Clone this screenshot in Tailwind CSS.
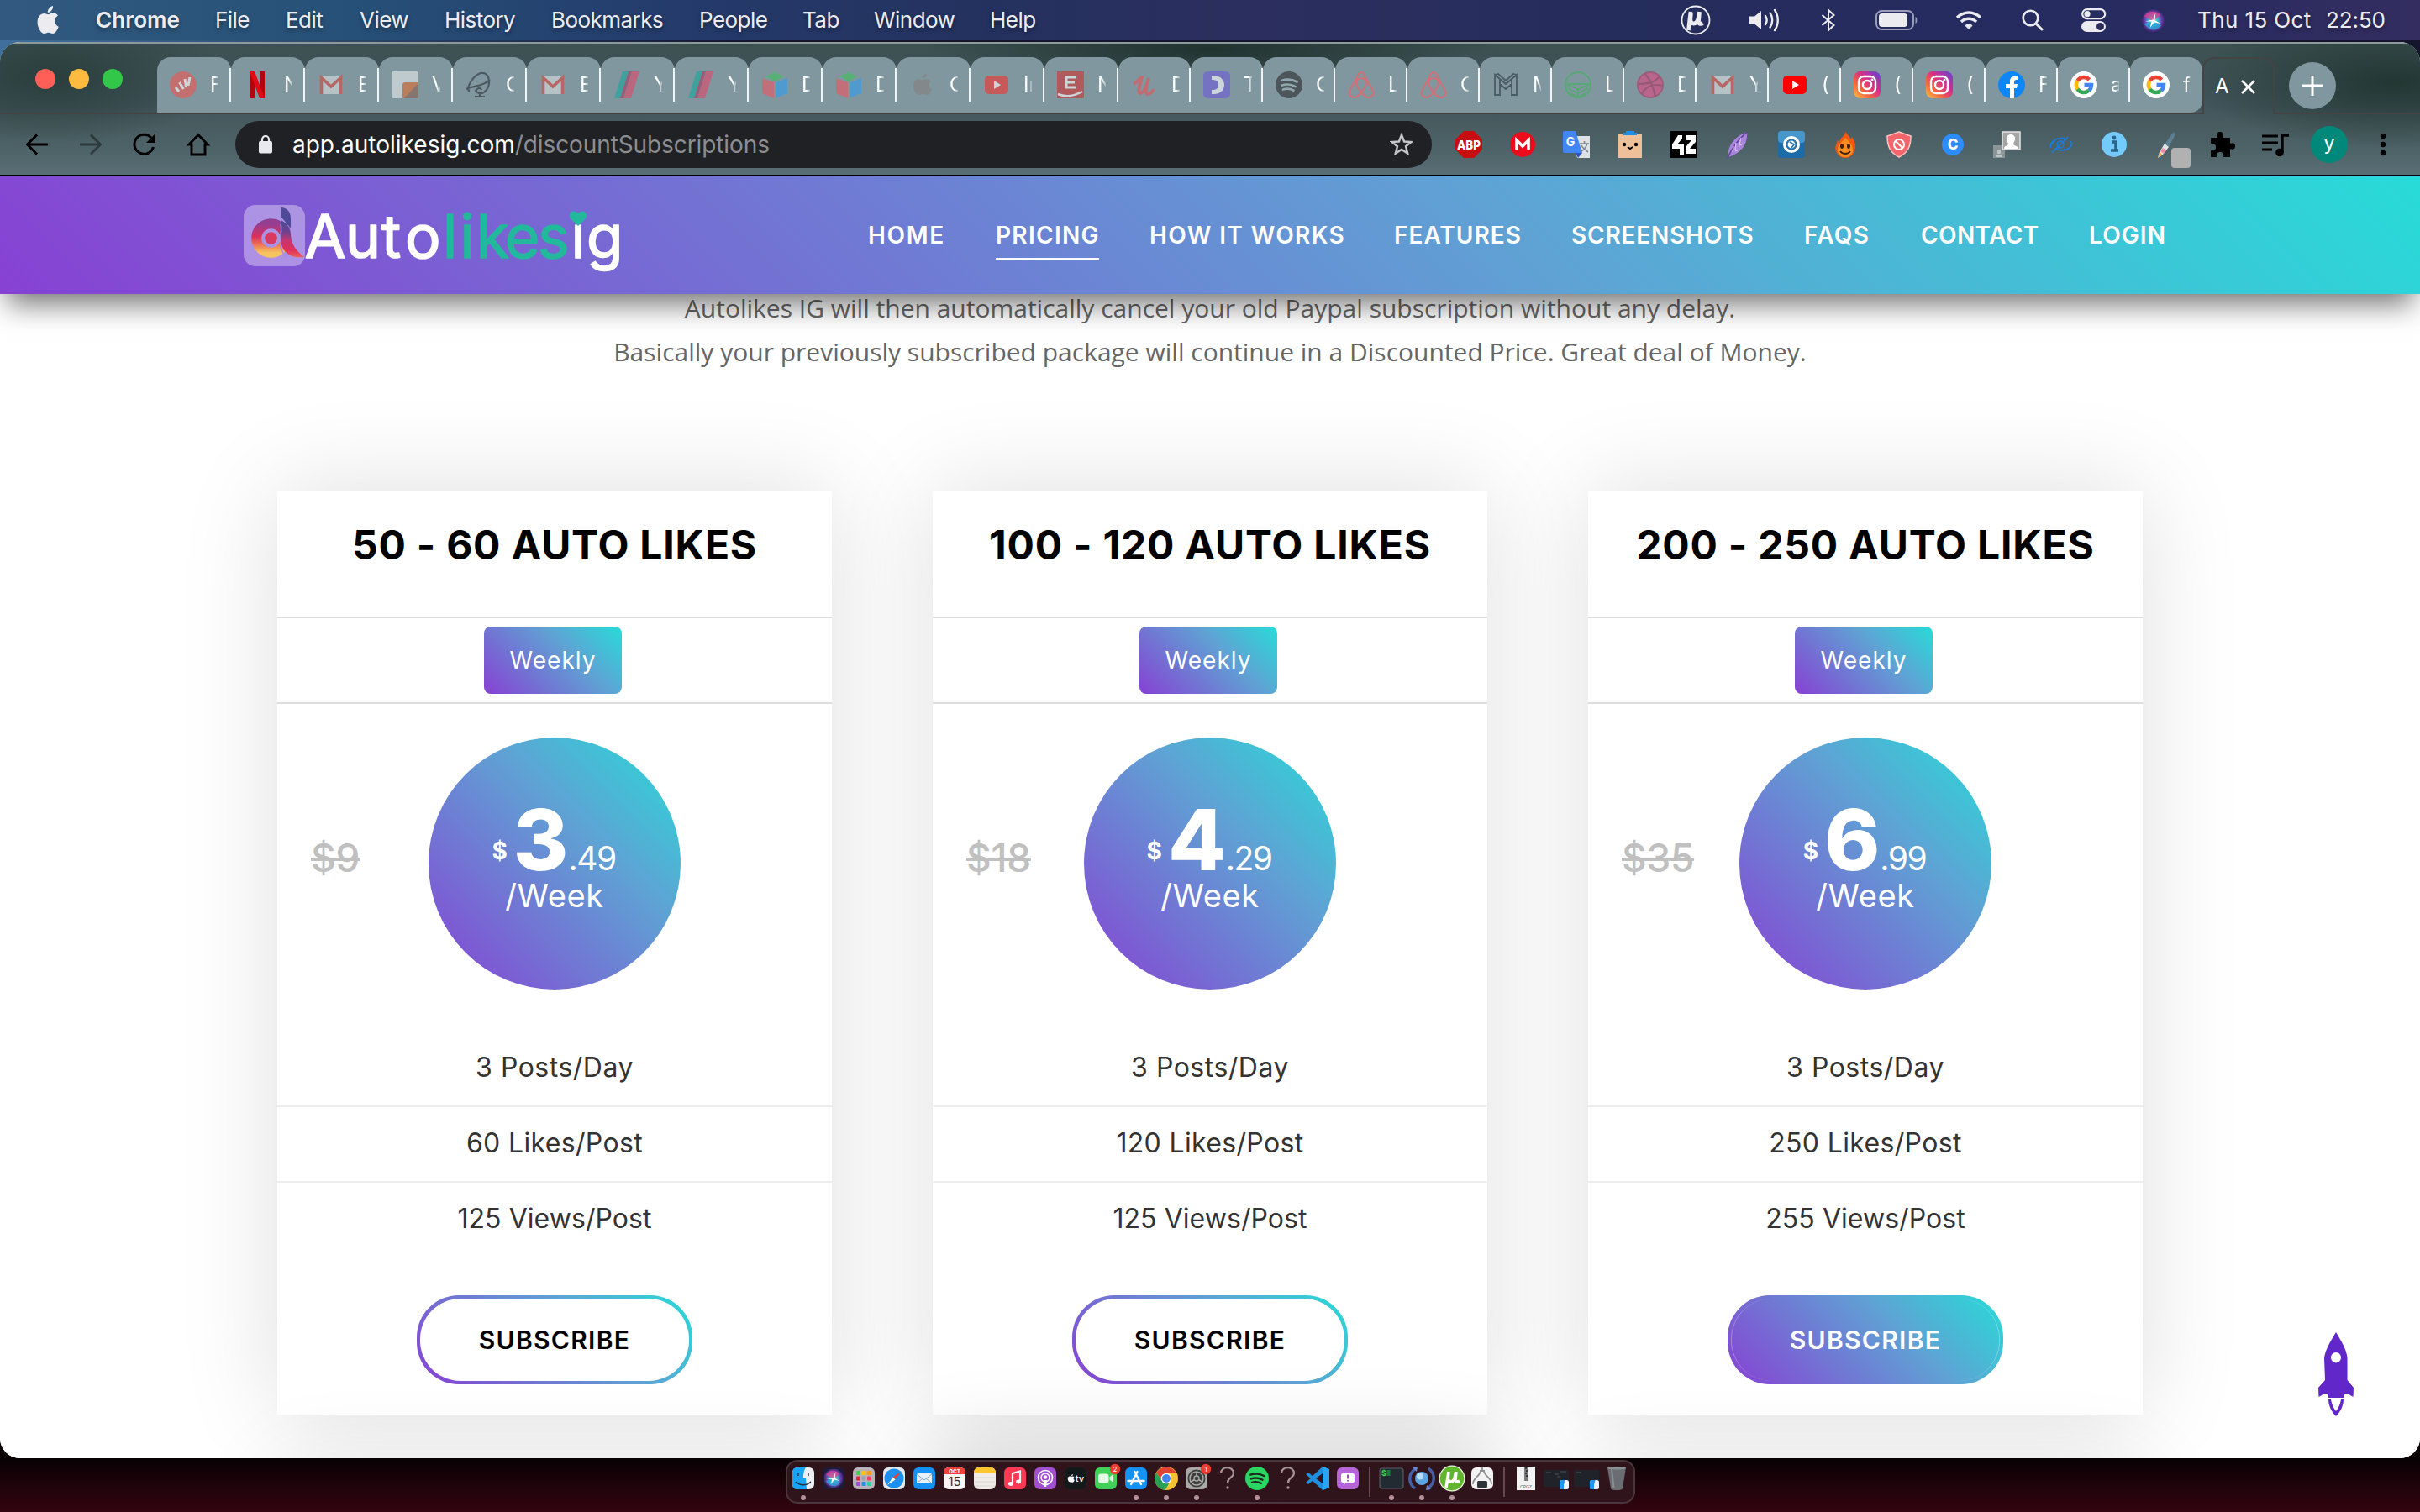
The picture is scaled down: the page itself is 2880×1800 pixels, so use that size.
<!DOCTYPE html>
<html lang="en">
<head>
<meta charset="utf-8">
<title>Autolikesig – Discount Subscriptions</title>
<script src="https://cdn.jsdelivr.net/npm/@tailwindcss/browser@4"></script>
</head>
<body class="w-[2880px] h-[1800px] overflow-hidden flex flex-col font-['Inter',sans-serif] bg-[linear-gradient(180deg,transparent_900px,#0b0204_900px),linear-gradient(90deg,#3f6f9c_0px,#15152e_900px)]">

<!-- menu bar -->
<div class="h-12 shrink-0 flex items-center text-[26px] leading-[48px] tracking-[-0.55px] text-[#ececf0] whitespace-nowrap bg-[linear-gradient(90deg,#325a80_0px,#265077_420px,#243b6b_800px,#24315f_1180px,#2b2e5e_1500px,#252d5c_1920px,#262b60_2500px,#332d60_2880px)] [text-shadow:0_3px_5px_rgba(0,0,0,0.4)]">
  <svg class="ml-[43px] mr-[42px] w-[29px] h-[34px] shrink-0" viewBox="0 0 29 34" fill="#ececf0"><path d="M20 0c.3 2.300-.6 4.300-1.900 5.800-1.200 1.400-2.700 2.200-4.300 2.100-.2-2.200.7-4.100 1.900-5.500C16.900 1 18.700.1 20 0zM14.500 10.300c1.300 0 3-1.700 5.600-1.700 2.600 0 4.700 1.300 5.900 3-3 1.900-3.700 4.200-3.700 6.400 0 3.200 2 5.600 4.400 6.700-1 3.300-3.900 8.300-6.800 8.300-2 0-2.900-1.300-5.200-1.300-2.300 0-3.300 1.300-5.200 1.300C5.800 33 1.600 25.800 1.600 19.500c0-6.600 4-10.500 8-10.500 2.200 0 3.900 1.300 4.900 1.300z"/></svg>
  <span class="w-[142px] font-semibold tracking-[0.1px]">Chrome</span>
  <span class="w-[84px]">File</span>
  <span class="w-[88px]">Edit</span>
  <span class="w-[101px]">View</span>
  <span class="w-[127px]">History</span>
  <span class="w-[176px]">Bookmarks</span>
  <span class="w-[123px]">People</span>
  <span class="w-[85px]">Tab</span>
  <span class="w-[138px]">Window</span>
  <span class="w-[100px]">Help</span>
  <div class="ml-auto flex items-center">
    <div class="w-[82px] flex justify-center"><svg class="w-9 h-9" viewBox="0 0 36 36"><circle cx="18" cy="18" r="16.500" fill="none" stroke="#ececf0" stroke-width="1.800"/><path d="M12 8L9.500 30M12.500 10c-1 7-1.500 12 3 12s6-5 6.500-12M22.500 8l-1 11c-.3 4 2 4 5 2.500" fill="none" stroke="#ececf0" stroke-width="4.800"/></svg></div>
    <div class="w-[82px] flex justify-center"><svg class="w-[38px] h-[28px]" viewBox="0 0 38 28"><path d="M1 9.500h6L15 3v22l-8-6.500H1z" fill="#ececf0"/><path d="M20 9c2 3 2 7 0 10M25.500 5.500c3.600 5 3.600 12 0 17M31 2c5 7 5 17 0 24" fill="none" stroke="#ececf0" stroke-width="2.400" stroke-linecap="round"/></svg></div>
    <div class="w-[70px] flex justify-center"><svg class="w-[20px] h-[28px]" viewBox="0 0 20 28"><path d="M2.500 8l14 12L10 26V2l6.500 6-14 12" fill="none" stroke="#ececf0" stroke-width="2"/></svg></div>
    <div class="w-[94px] flex justify-center"><svg class="w-[52px] h-[24px]" viewBox="0 0 52 24"><rect x="1" y="1" width="44" height="22" rx="6.500" fill="none" stroke="#9a9cb8" stroke-width="2"/><rect x="4" y="4" width="34" height="16" rx="4" fill="#ececf0"/><path d="M47.500 8c2.500 1 2.500 7 0 8z" fill="#9a9cb8"/></svg></div>
    <div class="w-[76px] flex justify-center"><svg class="w-[32px] h-[24px]" viewBox="0 0 32 24" fill="none" stroke="#ececf0" stroke-width="3.400"><path d="M2 9c8-8 20-8 28 0M7 14c5-5 13-5 18 0"/><path d="M12 18.500c2.500-2.200 5.500-2.200 8 0L16 22.500z" fill="#ececf0" stroke-width="1"/></svg></div>
    <div class="w-[76px] flex justify-center"><svg class="w-[26px] h-[26px]" viewBox="0 0 26 26"><circle cx="10.500" cy="10.500" r="8.800" fill="none" stroke="#ececf0" stroke-width="2.600"/><path d="M17 17l7 7" stroke="#ececf0" stroke-width="3" stroke-linecap="round"/></svg></div>
    <div class="w-[70px] flex justify-center"><svg class="w-[30px] h-[28px]" viewBox="0 0 30 28"><rect x="1.200" y="1.200" width="27" height="11" rx="5.500" fill="none" stroke="#ececf0" stroke-width="2.200"/><circle cx="7" cy="6.700" r="3.600" fill="#ececf0"/><rect x="0" y="15" width="29" height="13" rx="6.500" fill="#ececf0"/><circle cx="22.500" cy="21.500" r="4.500" fill="#2b2b5e"/></svg></div>
    <div class="w-[70px] flex justify-center"><svg class="w-[27px] h-[27px]" viewBox="0 0 28 28"><use href="#siri"/></svg></div>
    <span class="ml-[18px] w-[153px] tracking-[0.4px]">Thu 15 Oct</span>
    <span class="w-[112px] tracking-[-0.1px]">22:50</span>
  </div>
</div>

<!-- browser window -->
<div class="relative mt-0.5 h-[1686px] shrink-0 rounded-[24px] overflow-hidden bg-white flex flex-col">
  <div class="h-[160px] shrink-0 border-t-2 border-[#8d9a9b] flex flex-col bg-[radial-gradient(ellipse_200px_80px_at_60px_40px,#2a3e3d_0%,transparent_100%),radial-gradient(ellipse_340px_46px_at_1440px_6px,#20332f_0%,transparent_100%),radial-gradient(ellipse_240px_80px_at_2850px_46px,#223632_0%,transparent_100%),linear-gradient(180deg,#3d5052_0%,#40545a_45%,#485c60_60%,#4e6368_80%,#5a7077_100%)]">
    <!-- tab strip -->
    <div class="h-[84px] shrink-0 flex items-end">
      <div class="w-[2621px] h-full flex items-end border-b-2 border-[#444444]">
        <div class="flex gap-4 w-[187px] pl-[42px] pb-[28px]">
          <span class="w-6 h-6 rounded-full bg-[#ff5f57]"></span><span class="w-6 h-6 rounded-full bg-[#febb3f]"></span><span class="w-6 h-6 rounded-full bg-[#32c749]"></span>
        </div>
        <div id="tabs" class="flex"></div>
      </div>
      <div class="w-[86px] h-[68px] rounded-t-[14px] border-2 border-b-0 border-[#444444] flex items-center justify-between pl-[13px] pr-[21px] text-white text-[24px]"><span>A</span><svg class="w-[17px] h-[17px]" viewBox="0 0 17 17"><path d="M1 1l15 15M16 1L1 16" stroke="#fff" stroke-width="2.600"/></svg></div>
      <div class="flex-1 h-full border-b-2 border-[#444444] flex pl-[17px] pt-[22px]">
        <div class="w-14 h-14 rounded-full bg-[#8097a0] flex items-center justify-center"><svg class="w-6 h-6" viewBox="0 0 24 24"><path d="M12 0v24M0 12h24" stroke="#fff" stroke-width="3"/></svg></div>
      </div>
    </div>
    <!-- toolbar -->
    <div class="h-[72px] shrink-0 flex items-center pl-3">
      <div class="w-16 flex justify-center"><svg class="w-[26px] h-[26px]" viewBox="0 0 26 26"><path d="M13 1.500L1.500 13 13 24.500M1.500 13H26" fill="none" stroke="#000" stroke-width="3"/></svg></div>
      <div class="w-16 flex justify-center"><svg class="w-[26px] h-[26px] opacity-40" viewBox="0 0 26 26"><path d="M13 1.500L24.500 13 13 24.500M24.500 13H0" fill="none" stroke="#000" stroke-width="3"/></svg></div>
      <div class="w-16 flex justify-center"><svg class="w-[28px] h-[28px]" viewBox="0 0 28 28"><path d="M24.500 17a11.500 11.500 0 1 1-2.500-11" fill="none" stroke="#000" stroke-width="3"/><path d="M27 1v11H16z"/></svg></div>
      <div class="w-16 flex justify-center"><svg class="w-[28px] h-[28px]" viewBox="0 0 28 28"><path d="M6 26V14H3L14 2.500 25 14h-3v12z" fill="none" stroke="#000" stroke-width="2.900"/></svg></div>
      <div class="ml-3 w-[1424px] h-14 rounded-full bg-[#202124] flex items-center pl-[28px] pr-[22px] text-[28px]">
        <svg class="w-4 h-[22px] mr-6" viewBox="0 0 16 22"><rect y="7" width="16" height="14.500" rx="2" fill="#e8eaed"/><path d="M4 8V5a4 4 0 0 1 8 0v3" fill="none" stroke="#e8eaed" stroke-width="2.200"/></svg>
        <span class="text-white">app.autolikesig.com</span><span class="text-[#8c8e91] tracking-[-0.1px]">/discountSubscriptions</span>
        <svg class="ml-auto w-[28px] h-[28px]" viewBox="0 0 28 28"><path d="M14 2.500l3.100 8 8.400.5-6.500 5.300 2.200 8.300L14 20l-7.200 4.600L9 16.300 2.500 11l8.400-.5z" fill="none" stroke="#c4c7c9" stroke-width="2.400"/></svg>
      </div>
      <div id="ext" class="ml-3 flex"></div>
    </div>
  </div>

  <!-- page -->
  <div class="relative flex-1 overflow-hidden bg-white border-t-2 border-black -mt-0.5">
    <header class="relative z-10 h-[140px] flex items-center bg-[linear-gradient(45deg,#8741d3,#5fa2d4_62%,#27dbd8)] shadow-[0_20px_32px_-8px_rgba(0,0,0,0.55)]">
      <svg class="ml-[290px] w-[460px] h-[100px] mt-[8px]" viewBox="0 0 460 100">
        <defs>
          <linearGradient id="lg" x1="0" y1="0" x2="0" y2="1"><stop offset="0" stop-color="#923f92"/><stop offset=".45" stop-color="#dd2f5d"/><stop offset=".75" stop-color="#ef7a55"/><stop offset="1" stop-color="#f5c45f"/></linearGradient>
          <linearGradient id="lt" x1="0" y1="0" x2="0" y2="1"><stop offset="0" stop-color="#4a4b98"/><stop offset=".3" stop-color="#6a4290"/><stop offset=".55" stop-color="#c83570"/><stop offset=".8" stop-color="#df2f5b"/><stop offset="1" stop-color="#ee5f56"/></linearGradient>
        </defs>
        <rect x="0" y="10" width="73" height="73" rx="14" fill="#fff" fill-opacity=".36"/>
        <path d="M44.500 13c7 .5 11.500 5 11.500 13v12l-11.500-14z" fill="#4f4a98"/>
        <circle cx="32.500" cy="49.500" r="17.300" fill="none" stroke="url(#lg)" stroke-width="12"/>
        <circle cx="32.500" cy="49.500" r="7.300" fill="#d93a62"/>
        <path d="M44 28c7 3 11 8 12 16 .5 10 3 18 16 28-16 2-24-5-27-15-1-8-1-18-1-29z" fill="url(#lt)"/>
        <path d="M44 33c2 5-1 16 0 25 1 6 3 10 6 14" fill="none" stroke="#ab8be0" stroke-width="1.500"/>
        <g font-family="Inter, sans-serif" font-size="71" stroke-linejoin="round" stroke-width="1.600">
          <text y="72.500" fill="#fff" stroke="#fff" x="72.500 121 164 192">Auto</text>
          <text y="72.500" fill="#23b89b" stroke="#23b89b" x="237 257.500 277 311 350">likes</text>
          <text y="72.500" fill="#fff" stroke="#fff" x="389.500 408">ıg</text>
        </g>
        <path d="M398 35l-8.500-8.500c-5-6 3-13 8.500-6.500 5.500-6.500 13.500.5 8.500 6.500z" fill="#23b89b"/>
      </svg>
      <nav class="ml-[283px] flex gap-[60px] text-white text-[28px] font-semibold leading-10 whitespace-nowrap">
        <span class="w-[92px] tracking-[1.7px]">HOME</span>
        <span class="relative w-[124px] tracking-[1.3px]">PRICING<i class="absolute left-0 -bottom-[10px] w-[123px] h-[3px] bg-white"></i></span>
        <span class="w-[231px] -ml-px tracking-[1.4px]">HOW IT WORKS</span>
        <span class="w-[151px] tracking-[1px]">FEATURES</span>
        <span class="w-[217px] tracking-[0.8px]">SCREENSHOTS</span>
        <span class="w-[79px] tracking-[1.3px]">FAQS</span>
        <span class="w-[140px] tracking-[0.4px]">CONTACT</span>
        <span class="w-[92px] tracking-[1.1px]">LOGIN</span>
      </nav>
    </header>
    <p class="-mt-[9px] text-center font-['Open_Sans',sans-serif] text-[30px] leading-[52px] text-[#666666]">Autolikes IG will then automatically cancel your old Paypal subscription without any delay.<br>Basically your previously subscribed package will continue in a Discounted Price. Great deal of Money.</p>
    <div id="cards" class="mt-[139px] pl-[330px] grid grid-cols-[660px_660px_660px] gap-x-[120px] gap-y-[60px]"></div>
    <svg class="absolute left-[2757px] top-[1375px] w-[46px] h-[102px]" viewBox="0 0 46 102"><path fill="#6127c8" fill-rule="evenodd" d="M23 1C29 11 36 22 36.500 32V58l7.500 9-.5 11-7-4-3 0-1.500 5H14l-1.500-5-3 0-7 4L2 67l8-9L9 32C10 22 17 11 23 1zM23 25a6 6.200 0 1 0 .01 0z"/><path fill="#6127c8" d="M14 80l3 1c1 6 3 10 6 14 3-4 5-8 6-14l3-1c0 8-3 15-9 21-6-6-9-13-9-21z"/></svg>
  </div>
</div>

<!-- dock -->
<div class="flex-1 bg-[linear-gradient(180deg,#070103_0%,#1c030a_45%,#33040f_100%)] flex justify-center items-start pt-0.5">
  <div id="dock" class="w-[1011px] h-[52px] ml-px box-border border-2 border-[#4b353d] rounded-[14px] bg-[#30141c] flex pl-px pt-[6px]"></div>
</div>

<svg class="absolute w-0 h-0"><defs>
  <radialGradient id="sg"><stop offset="0" stop-color="#bff"/><stop offset=".35" stop-color="#3cc"/><stop offset=".75" stop-color="#6a3ab0"/><stop offset="1" stop-color="#3a2a68"/></radialGradient>
  <linearGradient id="ig" x1="0" y1="1" x2="1" y2="0"><stop offset="0" stop-color="#fdc34b"/><stop offset=".3" stop-color="#f4683c"/><stop offset=".6" stop-color="#d62e8a"/><stop offset="1" stop-color="#5b45d6"/></linearGradient>
  <symbol id="siri" viewBox="0 0 28 28"><circle cx="14" cy="14" r="14" fill="url(#sg)"/><path d="M3 9c4-8 14-8 20-2l-9 8z" fill="#e0428e" opacity=".75"/><path d="M3 18l11-4 10 6c-6 8-16 7-21-2z" fill="#2aa9d8" opacity=".75"/><path d="M4 15l10-2 3-9-1 10 8 4-9-2-5 7 2-8z" fill="#fff"/></symbol>
</defs></svg>

<script>
const svg = (inner, cls, vb) => `<svg class="${cls}" viewBox="0 0 ${vb} ${vb}">${inner}</svg>`;

/* ---------- tab favicons, 32-unit box ---------- */
const gmail = '<path d="M3 6h26v21H3z" fill="#dcdfe2"/><path d="M4.500 27V7.500L16 18 27.500 7.500V27" fill="none" stroke="#d9483b" stroke-width="3.600"/>';
const slashes = '<path d="M11 0h7L8 32H1z" fill="#16a89a"/><path d="M18 0h4L12 32H8z" fill="#a63a60"/><path d="M22 0h9L21 32h-9z" fill="#e3476a"/>';
const cube = '<path d="M16 1l11 5-11 6L5 6z" fill="#3fc25c"/><path d="M1 8l14 5v19L1 26z" fill="#ee5560"/><path d="M31 8l-14 5v19l14-6z" fill="#2f9ff0"/>';
const yt = c => `<rect x="2" y="5" width="28" height="22" rx="5" fill="${c}"/><path d="M13 11l8 5-8 5z" fill="#fff"/>`;
const airbnb = '<path d="M16 25c-4-5-6-8-6-11a6 6 0 0 1 12 0c0 3-2 6-6 11-4 5-8 7-11 5.500-4-2-4-5-2-9L12.500 4c1.500-4 5.500-4 7 0L29 21.500c2 4 2 7-2 9-3 1.500-7-.5-11-5.500z" fill="none" stroke="#ff5a5f" stroke-width="2.200"/>';
const insta = '<rect width="32" height="32" rx="8" fill="url(#ig)"/><rect x="6" y="6" width="20" height="20" rx="6" fill="none" stroke="#fff" stroke-width="2.400"/><circle cx="16" cy="16" r="5" fill="none" stroke="#fff" stroke-width="2.400"/><circle cx="22" cy="10" r="1.500" fill="#fff"/>';
const google = '<circle cx="16" cy="16" r="16" fill="#fff"/><g fill="none" stroke-width="4.600"><path d="M8.500 11A9 9 0 0 1 22.500 9.800" stroke="#ea4335"/><path d="M8.500 21a9 9 0 0 1 0-10" stroke="#fbbc05"/><path d="M22 22.600A9 9 0 0 1 8.400 21" stroke="#34a853"/><path d="M16.500 16H25a9 9 0 0 1-3 6.800" stroke="#4285f4"/></g>';
const spotify = (bg, fg) => `<circle cx="16" cy="16" r="16" fill="${bg}"/><path d="M7 11c6-2 13-1.500 18.500 1.500M8 16.500c5-1.600 11-1 15.500 1.500M9 21.500c4-1.200 9-.8 12.500 1.200" fill="none" stroke="${fg}" stroke-width="2.700" stroke-linecap="round"/>`;
const apple = '<path d="M21 3c0 3-2 5-5 5 0-3 2-5 5-5zM16 10c2 0 3-1 5-1s4 1 5 2.500c-4 3-3 8 1 9.500-1 4-3 7-5.500 7-2 0-2.500-1-5-1s-3 1-5 1C8 28 5 22 5 17c0-5 3-8 6-8 2 0 3 1 5 1z" fill="#85807e"/>';
const tabs = [
  ['<circle cx="16" cy="16" r="16" fill="#f2564f"/><path d="M7 19l4 5M11.500 13l5 8M18 9l1.500 9M24 7l-2 10" stroke="#fff" stroke-width="3"/>','F',0],
  ['<path d="M7 0h6v32H7zM19 0h6v32h-6z" fill="#b1060f"/><path d="M7 0h6l12 32h-6z" fill="#e50914"/>','N',1],
  [gmail,'E',0],
  ['<rect width="32" height="32" rx="2" fill="#e9edee"/><path d="M13 16q0-3 3-3h16v19H13z" fill="#e0702f"/><path d="M32 14v18H15z" fill="#8a6150"/>','V',0],
  ['<path d="M1 21C8 17 22 18 29 10M5 24c-6-3 4-19 13-22 12-2 12 15 6 21-3 4-9 4-12 0 3-4 6-4 7-1M11 30h12M17 26v4" fill="none" stroke="#2b3336" stroke-width="2.200"/>','C',0],
  [gmail,'E',0],[slashes,'Y',0],[slashes,'Y',0],[cube,'D',0],[cube,'D',0],[apple,'C',0],
  [yt('#f5312c'),'Ir',0],
  ['<path d="M0 0h32v32H0z" fill="#d2322f"/><path d="M23 7H11v12h12M11 13h10" fill="none" stroke="#fff" stroke-width="3"/><path d="M1 27c10 4 20 2 29-3" stroke="#fff" stroke-width="2.500" fill="none"/>','N',0],
  ['<path d="M3 15c6-3 8-8 10-8-2 7-6 18-2 19 4 0 8-9 10-18-3 10-5 19-1 19 3 0 5-2 7-6" fill="none" stroke="#ea5252" stroke-width="3.800"/>','D',0],
  ['<rect width="32" height="32" rx="5" fill="#6f5bd8"/><path d="M10 5c10-1 15 5 15 11s-5 12-15 11v-5c6 0 8-2 8-6s-2-6-8-6z" fill="#fff"/>','T',0],
  [spotify('#2a2c2d','#9db0b7'),'C',0],[airbnb,'L',0],[airbnb,'C',0],
  ['<path d="M3 28V4l13 11L29 4v24h-6V15l-7 6-7-6v13zM9 28V10M23 28V10M3 4l4-1 9 8 9-8 4 1" fill="none" stroke="#26343a" stroke-width="1.800"/>','M',0],
  ['<circle cx="16" cy="16" r="15" fill="none" stroke="#3cb457" stroke-width="2"/><path d="M2 15h28M16 31V20M16 21L3 16M16 21l13-5M16 26L4 20M16 26l12-6M16 31L7 26M16 31l9-5" stroke="#3cb457" stroke-width="1.800"/>','L',0],
  ['<circle cx="16" cy="16" r="15" fill="#e0457f" stroke="#b03763" stroke-width="2"/><path d="M10 3c6 7 10 16 12 27M2 15c10 0 20-2 25-9M6 27c4-9 13-13 25-10" fill="none" stroke="#a6325c" stroke-width="2.200"/>','D',0],
  [gmail,'Y',0],[yt('#f00'),'(',1],[insta,'(',1],[insta,'(',1],
  ['<circle cx="16" cy="16" r="16" fill="#0f86f5"/><path d="M14 32V20h-5v-5h5v-3c0-5 3-7 9-6v4c-3 0-4 0-4 3v2h4l-1 5h-3v12z" fill="#fff"/>','F',1],
  [google,'a',1],[google,'f',1]
];
document.getElementById('tabs').innerHTML = tabs.map(([ic, t, on], i) => `
  <div class="${i < 13 ? 'w-[88px]' : i < 27 ? 'w-[86px]' : 'w-[86px] rounded-br-[14px]'} h-[66px] rounded-t-[16px] bg-[#8097a0] flex items-center">
    <div class="w-full h-10 flex items-center pl-[15px] ${i < 27 ? 'border-r-2 border-white/90' : ''}">
      ${svg(ic, 'w-8 h-8 shrink-0 ' + (on ? '' : 'opacity-60'), 32)}
      <span class="ml-[16px] w-[10px] shrink-0 overflow-hidden text-[24px] leading-8 text-white whitespace-nowrap [mask-image:linear-gradient(90deg,#000_55%,transparent_115%)]">${t}</span>
    </div>
  </div>`).join('');

/* ---------- extensions, 32-unit box ---------- */
const T = (s, x, y, size, fill, w = 700) => `<text x="${x}" y="${y}" font-size="${size}" font-weight="${w}" fill="${fill}" text-anchor="middle" font-family="Inter, sans-serif">${s}</text>`;
const ext = [
  '<path d="M10 0h12l10 10v12L22 32H10L0 22V10z" fill="#c70d10"/><text x="16" y="21.500" font-size="15" font-weight="800" fill="#fff" text-anchor="middle" textLength="28" lengthAdjust="spacingAndGlyphs" font-family="Inter, sans-serif">ABP</text>',
  '<circle cx="16" cy="16" r="15" fill="#ec0c1c"/><path d="M9 22V11l7 7 7-7v11" fill="none" stroke="#fff" stroke-width="3.600"/>',
  '<path d="M10 6h22v26H17z" fill="#dfe2e5"/><path d="M0 2q0-2 2-2h13l8 26H2q-2 0-2-2z" fill="#4285f4"/><path d="M15 26h8l-5 6z" fill="#2a56c6"/><path d="M20 15h11M25.500 12v3M29 15c-2 6-5 8-8 10M22 17c2 4 5 6 8 8" stroke="#7c8a92" stroke-width="1.600" fill="none"/>' + T('G', 9, 18, 14, '#fff'),
  '<path d="M2 4h28v28H2z" fill="#edc09a"/><path d="M8 5V2h3V0h10v2h3v3z" fill="#1f8fe8"/><circle cx="9" cy="16" r="2.200"/><circle cx="23" cy="16" r="2.200"/><path d="M13 19l3 2 3-2" fill="none" stroke="#000" stroke-width="2"/>',
  '<path d="M0 0h32v32H0z"/><path d="M14 5h-5L2 16v5h9v7h5V16h-8l6-7zM18 5h12v8l-7 8h7v6H18v-8l7-8h-7z" fill="#fff"/>',
  '<path d="M27 1c1 14-5 24-22 30C3 18 13 6 27 1z" fill="#a983dd"/><path d="M27 1C18 9 10 18 4 32" stroke="#5d3f94" stroke-width="1.600" fill="none"/><path d="M14 14l-1 8M11 18l-1 7M20 8l-2 8M18 17l5-2M13 24l5-2" stroke="#d6c2f2" stroke-width="1.200"/>',
  '<rect width="32" height="32" rx="4" fill="#1c6ba6"/><rect width="32" height="14" rx="4" fill="#4897cc"/><circle cx="16" cy="16" r="10" fill="#fff"/><circle cx="16" cy="16" r="5.500" fill="none" stroke="#2a76ad" stroke-width="2.200"/><path d="M14 13l5 3-3 4" fill="none" stroke="#2a76ad" stroke-width="1.800"/>',
  '<path d="M17 0c-1 4 5 5 5 10l2-3c2 4 6 9 3 16-2 6-6 9-11 9S7 29 5 24c-2-6 1-9 2-13l2 3c0-6 7-8 8-14z" fill="#f2580f"/><path d="M16 8c4 4 9 8 9 15 0 5-4 8-9 8s-9-3-9-8c0-7 6-10 9-15z" fill="#fb8c20"/><ellipse cx="12" cy="18" rx="2" ry="3" fill="#40200a"/><ellipse cx="20" cy="18" rx="2" ry="3" fill="#40200a"/><path d="M10 24c3 4 9 4 12 0" stroke="#40200a" stroke-width="2" fill="none"/>',
  '<path d="M16 1l14 5c0 13-4 20-14 25C6 26 2 19 2 6z" fill="#f1656b" stroke="#fbc6c6" stroke-width="1.500"/><circle cx="16" cy="16" r="6" fill="none" stroke="#fff" stroke-width="2"/><path d="M12 12l8 8" stroke="#fff" stroke-width="2"/>',
  '<circle cx="16" cy="16" r="13" fill="#2d8cff"/>' + T('C', 16, 22, 17, '#fff', 800),
  '<path d="M0 17h14v15H0z" fill="#8b9598"/><path d="M3 31c0-4 8-4 8 0zM5 22h4v5H5z" fill="#bfc5c7"/><path d="M11 1h21v21H11z" fill="#a3a5a4" stroke="#e6e6e6" stroke-width="1.500"/><path d="M13 21c0-4 5-3 5-6-4-6-2-11 3-11s7 5 3 11c0 3 6 2 6 6z" fill="#fff"/>',
  '<path d="M4 16c5-7 10-9 20-6M28 12c2 2 2 5-1 8-6 4-13 3-18 1M4 20c0-3 2-6 5-8" fill="none" stroke="#1a7be0" stroke-width="1.600"/><circle cx="16" cy="16" r="4" fill="none" stroke="#1a7be0" stroke-width="1.500"/><path d="M25 7L6 26" stroke="#1a7be0" stroke-width="1.600"/>',
  '<circle cx="16" cy="16" r="15" fill="#72cbfb"/><path d="M13 13h5v10M12 23h9" stroke="#2b6488" stroke-width="3.600" fill="none"/><circle cx="16" cy="8" r="2.400" fill="#2b6488"/>',
  '<path d="M19 6c3-6 7-5 5 0l-7 13-5-3z" fill="#5d7f93"/><path d="M12 15l5 4-7 9-6 4 2-7z" fill="#dfe3e2"/><path d="M10 20l4 3-3 4-4-3z" fill="#ef8aa4"/><path d="M6 25l3 3-4 3z" fill="#f2a23c"/><rect x="20" y="20" width="23" height="24" rx="4" fill="#b1b1b1"/>',
  '<path d="M2 8h8C8 3 10 1 13 1s5 2 3 7h9v7c4-2 6 0 6 3s-2 5-6 3v10h-8c1-4-1-6-4-6s-5 2-4 6H2v-8c5 1 6-1 6-4s-2-5-6-4z" transform="translate(1)"/>',
  '<path d="M0 6h19M0 14h19M0 22h12" stroke="#000" stroke-width="3"/><path d="M24 25V5h8" fill="none" stroke="#000" stroke-width="3.400"/><circle cx="21" cy="25.500" r="4.800"/>',
  '<circle cx="16" cy="16" r="22" fill="#00897b"/>' + T('y', 16, 22, 24, '#fff', 400),
  '<circle cx="16" cy="6" r="3.200"/><circle cx="16" cy="16" r="3.200"/><circle cx="16" cy="26" r="3.200"/>'
];
document.getElementById('ext').innerHTML = ext.map(e => `<div class="w-16 flex justify-center">${svg(e, 'w-8 h-8 overflow-visible', 32)}</div>`).join('');

/* ---------- pricing cards ---------- */
const plans = [
  {title:'50 - 60 AUTO LIKES', old:'$9', a:'3', b:'.49', rows:['3 Posts/Day','60 Likes/Post','125 Views/Post']},
  {title:'100 - 120 AUTO LIKES', old:'$18', a:'4', b:'.29', rows:['3 Posts/Day','120 Likes/Post','125 Views/Post']},
  {title:'200 - 250 AUTO LIKES', old:'$35', a:'6', b:'.99', rows:['3 Posts/Day','250 Likes/Post','255 Views/Post'], solid:true}
];
const card = p => `
  <div class="h-[1100px] bg-white shadow-[0_0_110px_rgba(0,0,0,0.13)]">
    <h2 class="h-[150px] pt-[35px] text-center text-[48px] leading-[60px] font-bold tracking-[0.8px] text-black whitespace-nowrap">${p.title}</h2>
    <div class="h-[104px] border-y-2 border-[#dddddd] flex items-center justify-center">
      <span class="mr-1 w-[164px] h-20 rounded-lg flex items-center justify-center text-white text-[28px] tracking-[1px] bg-[linear-gradient(45deg,#8741d3,#5fa2d4_62%,#27dbd8)]">Weekly</span>
    </div>
    <div class="mt-10 grid grid-cols-[180px_300px_180px] items-center">
      <span class="ml-10 mb-[15px] justify-self-start text-[46px] leading-[60px] font-medium tracking-[-0.3px] text-[#c0c0c0] line-through decoration-4">${p.old}</span>
      <div class="w-[300px] h-[300px] rounded-full pt-[72px] text-white text-center bg-[linear-gradient(45deg,#8741d3,#5fa2d4_62%,#27dbd8)]">
        <div class="h-[100px] flex justify-center items-baseline leading-[100px]"><span class="text-[28px] font-bold relative -top-[13px] mr-[7px]">$</span><span class="text-[100px] font-extrabold tracking-[-1px]">${p.a}</span><span class="text-[39px] tracking-[-1.5px] ml-[1px] mr-[2px]">${p.b}</span></div>
        <div class="text-[38px] leading-8 tracking-[0.6px]">/Week</div>
      </div>
    </div>
    <ul class="mt-[50px] text-center text-[32px] leading-[85px] text-[#333333]">
      <li class="h-[90px] border-b-2 border-[#eeeeee] tracking-[0.5px]">${p.rows[0]}</li><li class="h-[90px] border-b-2 border-[#eeeeee] tracking-[0.35px]">${p.rows[1]}</li><li class="h-[90px] tracking-[0.05px]">${p.rows[2]}</li>
    </ul>
    <div class="mt-[44px] mx-auto w-[328px] h-[106px] rounded-[50px] p-1 bg-[linear-gradient(45deg,#8741d3,#5fa2d4_62%,#27dbd8)]">
      <div class="h-full rounded-[48px] flex items-center justify-center text-[30px] font-semibold tracking-[1.3px] ${p.solid ? 'text-white border-x border-white/30' : 'bg-white text-black'}">SUBSCRIBE</div>
    </div>
  </div>`;
document.getElementById('cards').innerHTML = plans.map(card).join('') +
  '<div class="h-[200px] shadow-[0_0_110px_rgba(0,0,0,0.09)]"></div><div class="h-[200px] shadow-[0_0_110px_10px_rgba(0,0,0,0.18)]"></div><div class="h-[200px] shadow-[0_0_110px_rgba(0,0,0,0.09)]"></div>';

/* ---------- dock, 28-unit box ---------- */
const sq = (f, extra = '') => `<rect x="1" y="1" width="26" height="26" rx="6" fill="${f}"/>${extra}`;
const bubble = n => `<circle cx="25" cy="3" r="6.200" fill="#ec3b33"/>${T(n, 25, 6, 8, '#fff', 400)}`;
const miniFinder = '<rect x="18" y="16" width="11" height="11" rx="2.500" fill="#eef1f6"/><path d="M18 18.500q0-2.500 2.500-2.500h4l-1.500 6v5h-2.500q-2.500 0-2.500-2.500z" fill="#1c98f5"/>';
const query = '<path d="M7 8c0-9 15-9 15 0 0 5-7 5-7 11" fill="none" stroke="#a5969a" stroke-width="2.200"/><circle cx="15" cy="25" r="1.700" fill="#a5969a"/>';
const grid = ['#3ed34a','#ffc400','#ff9a1e','#e8203c','#9aa3ad','#fb3d63','#a54be0','#2f8cf5','#2bd0a5'].map((c, i) => `<rect x="${5 + (i % 3) * 6.500}" y="${5 + Math.floor(i / 3) * 6.500}" width="5" height="5" rx="1" fill="${c}"/>`).join('');
const dock = [
  [sq('#eceff4','<path d="M1 7q0-6 6-6h10c-3 5-3 9-3 13h3l1 13H7q-6 0-6-6z" fill="#18a4f8"/><path d="M8 8v3M20 8v3M5 18c5 5 13 5 18 0" stroke="#22303c" stroke-width="1.400" fill="none"/>'),1],
  [sq('#1f1a3a','<g transform="translate(2.500 2.500) scale(.82)"><use href="#siri" width="28" height="28"/></g>')],
  [sq('#b9b3b8',grid)],
  [sq('#e4e8ec','<circle cx="14" cy="14" r="11.500" fill="#1c90ef"/><path d="M22 6l-6.500 9.500-3-3z" fill="#f23c30"/><path d="M6 22l6.500-9.500 3 3z" fill="#fff"/>')],
  [sq('#1391f6','<rect x="5" y="8" width="18" height="12" rx="1.500" fill="#e9f1f8"/><path d="M5 9l9 7 9-7M5 20l7-6M23 20l-7-6" stroke="#8ea3b5" fill="none"/>')],
  [sq('#f7f5f5','<path d="M1 9V7q0-6 6-6h14q6 0 6 6v2z" fill="#ef4038"/>'+T('OCT',14,7.500,6.500,'#fff')+T('15',14,22.500,15,'#333',400))],
  [sq('#f0ede9','<path d="M1 7.500q0-6.500 6-6.500h14q6 0 6 6.500z" fill="#fdc530"/><path d="M2 13h24M2 18h24M2 23h24" stroke="#d8d5d0"/>')],
  [sq('#fb3954','<path d="M11 20V8l9-2.500v12" fill="none" stroke="#fff" stroke-width="2.200"/><ellipse cx="9" cy="20.500" rx="3" ry="2.400" fill="#fff"/><ellipse cx="18" cy="18" rx="3" ry="2.400" fill="#fff"/>')],
  [sq('#a24fd0','<circle cx="14" cy="13" r="8.500" fill="none" stroke="#fff" stroke-width="1.600"/><circle cx="14" cy="13" r="5" fill="none" stroke="#fff" stroke-width="1.500"/><circle cx="14" cy="12.500" r="2.200" fill="#fff"/><path d="M12 16h4l-.8 8h-2.400z" fill="#fff"/>')],
  [sq('#121a1b',T('tv',19,18,11,'#fff',500)+'<path d="M11 9c0 1.500-1 2-2 2 0-1 1-2 2-2zM8.500 12c2-1 3-.5 4 .3-1.500 1.500-1 3 .3 3.700-1 3-2 3-4 2.500-2 .5-4-1-4-4s2-3.300 3.700-2.500z" fill="#fff"/>')],
  [sq('#3fd158','<rect x="5" y="8.500" width="12.500" height="11" rx="3" fill="#e8fbe9"/><path d="M18.500 12.500l4.500-3.500v10l-4.500-3.500z" fill="#e8fbe9"/>'+bubble('2'))],
  [sq('#1492f3','<path d="M15.500 6L8 21M12.500 6L20 21M4.500 17h19" stroke="#fff" stroke-width="2.400" stroke-linecap="round"/>'),1],
  ['<circle cx="14" cy="14" r="14" fill="#f4c430"/><path d="M2 7a14 14 0 0 1 24 0.500H14L8 16z" fill="#e04434"/><path d="M1.900 7A14 14 0 0 0 12.500 28L19 17l-11-1z" fill="#2aa055"/><circle cx="14" cy="14" r="6.300" fill="#fff"/><circle cx="14" cy="14" r="5" fill="#4286f5"/>',1],
  [sq('#a9a9a7','<circle cx="14" cy="14" r="10.500" fill="#3c3c3c"/><circle cx="14" cy="14" r="8" fill="none" stroke="#a9a9a7" stroke-width="1.500"/><circle cx="14" cy="14" r="3" fill="none" stroke="#a9a9a7" stroke-width="1.300"/><path d="M14 11V6M16.500 15.500l5 3M11.500 15.500l-5 3" stroke="#a9a9a7" stroke-width="1.500"/>'+bubble('1')),1],
  [query],
  ['<g transform="scale(.875)">'+spotify('#2bd562','#1c2a20')+'</g>',1],
  [query],
  ['<path d="M20 0l8 3v22l-8 3L8 17l-5 4-3-2 5.500-5L0 9l3-2 5 4zM20 8l-8 6 8 6z" fill="#1f8fdd" fill-rule="evenodd"/><path d="M20 0l8 3v22l-8 3z" fill="#29a5f3"/>'],
  [sq('#b565d8','<path d="M8 8h12q2 0 2 2v7q0 2-2 2h-8l-3 3v-3H8q-2 0-2-2v-7q0-2 2-2z" fill="#fff"/><path d="M14 9.500v5M14 16v1.600" stroke="#a04cc8" stroke-width="2"/>')],
  null,
  ['<rect x="0" y="2" width="28" height="24" rx="2" fill="#222b31" stroke="#59636a"/>'+T('$',5,11,9,'#3fd24b')+'<path d="M8.500 4h4v7h-4z" fill="#15803a"/>',1],
  ['<circle cx="14" cy="14" r="8" fill="#5aa5e2"/><circle cx="12" cy="11.500" r="4" fill="#b8dcf4"/><path d="M7 2C-3 9-2 20 6 26M21 26c10-7 9-18 1-24" fill="none" stroke="#4460a8" stroke-width="3.400"/><path d="M3 1l6-1-1 6zM25 27l-6 1 1-6z" fill="#6d86c8"/>',1],
  ['<circle cx="14" cy="14" r="15.500" fill="#eef6e8"/><circle cx="14" cy="14" r="14.300" fill="#62b52f"/><path d="M10 6L7 25M9.800 8c-1 6-1 10 3 10s5-5 5.500-11M19 6l-1 9c-.3 3.500 2 3.500 5 2" fill="none" stroke="#fff" stroke-width="3.600"/>',1],
  [sq('#f4f3f3','<path d="M14 0v5M11 5h6M12 5c0 6-10 9-9 16M16 5c0 6 10 9 9 16" fill="none" stroke="#8d8f90" stroke-width="1.800"/><rect x="8" y="17" width="12" height="8" rx="1.500" fill="#2d3439"/>')],
  null,
  ['<path d="M3 0h22v28H3z" fill="#f2f2f2"/><path d="M12 1h5v16h-5z" fill="#77797c"/><path d="M13 2h2M14 5h2M13 8h2M14 11h2" stroke="#222" stroke-width="1.500"/>'+T('CPGZ',14,26,5,'#777',500)],
  ['<rect x="-1" y="4" width="30" height="20" fill="#20232a"/><path d="M2 7h6M12 9h5M15 12h4M18 6h8" stroke="#4a5058" stroke-width="1.200"/>'+miniFinder],
  ['<rect x="-1" y="4" width="30" height="20" fill="#20232a"/><path d="M2 7h6" stroke="#4a5058" stroke-width="1.200"/>'+miniFinder],
  ['<path d="M3 1h22l-4 25q-.5 2-7 2t-7-2z" fill="#6a6e72"/><path d="M8 3l2.500 22" stroke="#8b8f93" stroke-width="2"/><ellipse cx="14" cy="1.800" rx="11" ry="1.800" fill="#8b8f92"/>']
];
document.getElementById('dock').innerHTML = dock.map(d => d
  ? `<div class="w-9 flex flex-col items-center gap-[6px]">${svg(d[0], 'w-7 h-7 overflow-visible', 28)}${d[1] ? '<span class="w-1.5 h-1.5 rounded-full bg-[#b3929c]"></span>' : ''}</div>`
  : '<div class="w-4 flex justify-center"><span class="w-0.5 h-9 bg-[#654a53]"></span></div>').join('');
</script>
</body>
</html>
